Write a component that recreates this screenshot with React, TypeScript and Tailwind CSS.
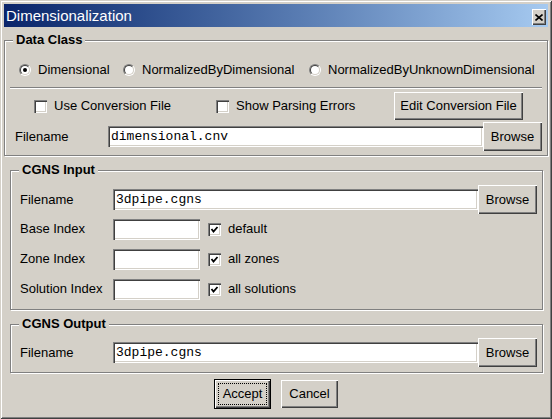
import type { ReactNode } from "react";

const raised =
  "flex items-center justify-center bg-[#d4d0c8] shadow-[inset_1px_1px_0_#fff,inset_-1px_-1px_0_#404040,inset_-2px_-2px_0_#808080]";
const sunken =
  "shadow-[inset_1px_1px_0_#808080,inset_2px_2px_0_#404040,inset_-1px_-1px_0_#fff,inset_-2px_-2px_0_#d4d0c8]";

function GroupBox({ title, className, children }: { title: string; className: string; children: ReactNode }) {
  return (
    <div className={`relative flex flex-col border border-[#808080] shadow-[inset_1px_1px_0_#fff,1px_1px_0_#fff] ${className}`}>
      <span className="absolute left-[8px] top-[-9px] bg-[#d4d0c8] px-[3px] font-bold leading-[16px]">{title}</span>
      {children}
    </div>
  );
}

function Radio({ checked }: { checked?: boolean }) {
  return (
    <span className="flex h-[12px] w-[12px] shrink-0 rounded-full border border-b-white border-l-[#808080] border-r-white border-t-[#808080]">
      <span className="flex h-full w-full items-center justify-center rounded-full border border-b-[#d4d0c8] border-l-[#404040] border-r-[#d4d0c8] border-t-[#404040] bg-white">
        {checked && <span className="h-[4px] w-[4px] rounded-full bg-black" />}
      </span>
    </span>
  );
}

function Check({ checked }: { checked?: boolean }) {
  return (
    <span className={`flex h-[13px] w-[13px] shrink-0 items-center justify-center bg-white ${sunken}`}>
      {checked && (
        <svg width="13" height="13" viewBox="0 0 13 13">
          <polyline points="3.5,6 5.5,8.5 9.5,4" fill="none" stroke="black" strokeWidth="1.8" />
        </svg>
      )}
    </span>
  );
}

function TextBox({ value, width }: { value?: string; width: string }) {
  return (
    <input
      readOnly
      value={value ?? ""}
      className={`h-[21px] ${width} bg-white pl-[3px] font-['Liberation_Mono',monospace] text-[13px] text-black outline-none ${sunken}`}
    />
  );
}

function Browse() {
  return <button className={`h-[29px] w-[59px] ${raised}`}>Browse</button>;
}

export default function App() {
  return (
    <div className="flex h-[419px] w-[552px] flex-col bg-[#d4d0c8] p-[4px] font-['Liberation_Sans',Arial,sans-serif] text-[13px] leading-[16px] text-black shadow-[inset_1px_1px_0_#d4d0c8,inset_-1px_-1px_0_#404040,inset_2px_2px_0_#fff,inset_-2px_-2px_0_#808080]">
      {/* title bar */}
      <div className="flex h-[23px] items-start bg-gradient-to-r from-[#0a246a] to-[#a6caf0] pl-[2px] pr-[2px]">
        <span className="self-center text-[15px] leading-[18px] text-white">Dimensionalization</span>
        <button className={`ml-auto mt-[5px] h-[16px] w-[14px] ${raised}`}>
          <svg width="8" height="7" viewBox="0 0 8 7">
            <path d="M0.5 0.5L7.5 6.5M7.5 0.5L0.5 6.5" stroke="black" strokeWidth="1.6" />
          </svg>
        </button>
      </div>

      {/* Data Class */}
      <GroupBox title="Data Class" className="mt-[13px] h-[116px]">
        <div className="mt-[21px] flex h-[16px] items-center pl-[14px]">
          <label className="flex w-[104px] items-center gap-[7px]">
            <Radio checked />
            Dimensional
          </label>
          <label className="flex w-[186px] items-center gap-[7px]">
            <Radio />
            NormalizedByDimensional
          </label>
          <label className="flex items-center gap-[7px]">
            <Radio />
            NormalizedByUnknownDimensional
          </label>
        </div>
        <div className="mx-[5px] mt-[9px] h-[2px] border-b border-t border-b-white border-t-[#808080]" />
        <div className="mt-[3px] flex h-[28px] items-center pl-[29px]">
          <label className="flex w-[182px] items-center gap-[7px]">
            <Check />
            Use Conversion File
          </label>
          <label className="flex w-[178px] items-center gap-[7px]">
            <Check />
            Show Parsing Errors
          </label>
          <button className={`h-[28px] w-[129px] ${raised}`}>Edit Conversion File</button>
        </div>
        <div className="mt-[2px] flex h-[29px] items-center pl-[10px]">
          <span className="w-[93px]">Filename</span>
          <TextBox value="dimensional.cnv" width="w-[375px]" />
          <Browse />
        </div>
      </GroupBox>

      {/* CGNS Input */}
      <GroupBox title="CGNS Input" className="ml-[6px] mr-[5px] mt-[14px] h-[140px]">
        <div className="mt-[14px] flex h-[29px] items-center pl-[9px]">
          <span className="w-[93px]">Filename</span>
          <TextBox value="3dpipe.cgns" width="w-[365px]" />
          <Browse />
        </div>
        {[
          ["Base Index", "default", "mt-[4px]"],
          ["Zone Index", "all zones", "mt-[8px]"],
          ["Solution Index", "all solutions", "mt-[8px]"],
        ].map(([label, opt, mt]) => (
          <div key={label} className={`${mt} flex h-[22px] items-center pl-[9px]`}>
            <span className="w-[93px]">{label}</span>
            <TextBox width="w-[87px]" />
            <label className="ml-[8px] flex items-center gap-[7px]">
              <Check checked />
              {opt}
            </label>
          </div>
        ))}
      </GroupBox>

      {/* CGNS Output */}
      <GroupBox title="CGNS Output" className="ml-[6px] mr-[5px] mt-[14px] h-[49px]">
        <div className="mt-[13px] flex h-[29px] items-center pl-[9px]">
          <span className="w-[93px]">Filename</span>
          <TextBox value="3dpipe.cgns" width="w-[365px]" />
          <Browse />
        </div>
      </GroupBox>

      <div className="mt-[6px] flex items-center justify-center gap-[10px]">
        <div className="h-[30px] w-[57px] border border-black">
          <button className={`h-full w-full p-[3px] ${raised}`}>
            <span className="flex h-full w-full items-center justify-center border border-dotted border-black">Accept</span>
          </button>
        </div>
        <button className={`h-[28px] w-[57px] ${raised}`}>Cancel</button>
      </div>
    </div>
  );
}
